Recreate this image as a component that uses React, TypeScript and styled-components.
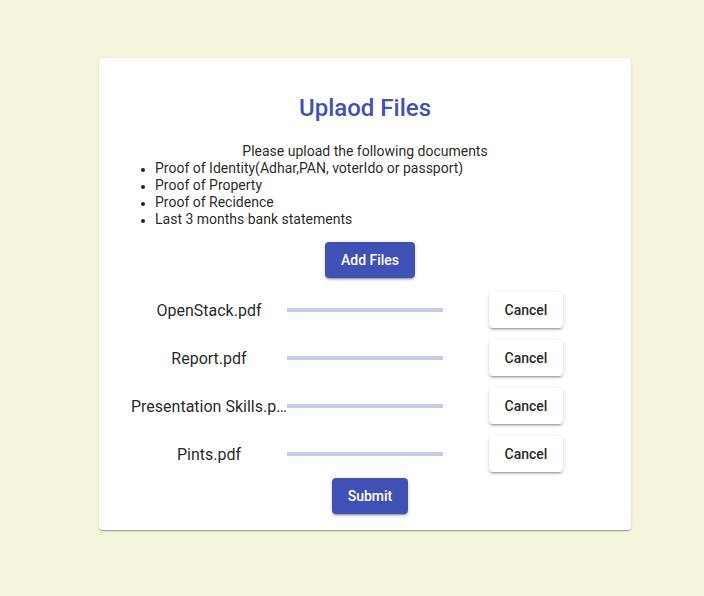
import styled, { createGlobalStyle } from "styled-components";

const GlobalStyle = createGlobalStyle`
  body {
    margin: 0;
    background-color: #f5f5dc;
    font-family: Roboto, "Liberation Sans", sans-serif;
  }
`;

const Page = styled.div`
  width: 704px;
  height: 596px;
  padding: 58px 0 0 99px;
  box-sizing: border-box;
`;

const Card = styled.div`
  width: 532px;
  box-sizing: border-box;
  padding: 36px 32px 16px;
  background-color: white;
  border-radius: 4px;
  box-shadow: 0px 2px 1px -1px rgba(0,0,0,0.2), 0px 1px 1px 0px rgba(0,0,0,0.14), 0px 1px 3px 0px rgba(0,0,0,0.12);
  display: flex;
  flex-direction: column;
`;

const Title = styled.h2`
  margin: 0;
  font-size: 24px;
  line-height: 28px;
  font-weight: 500;
  color: #3f51b5;
  text-align: center;
`;

const Info = styled.div`
  margin-top: 21px;
  font-size: 14px;
  line-height: 17px;
  color: rgba(0, 0, 0, 0.87);
`;

const Lead = styled.div`
  text-align: center;
`;

const DocList = styled.ul`
  margin: 0;
  padding-left: 24px;

  li::marker {
    font-size: 12px;
  }
`;

const Button = styled.button<{ $primary?: boolean }>`
  height: 36px;
  padding: 6px 16px;
  border: none;
  border-radius: 4px;
  font-family: Roboto, "Liberation Sans", sans-serif;
  font-size: 14px;
  font-weight: 500;
  cursor: pointer;
  background-color: ${(p) => (p.$primary ? "#3f51b5" : "white")};
  color: ${(p) => (p.$primary ? "white" : "rgba(0,0,0,0.87)")};
  box-shadow: 0px 3px 1px -2px rgba(0,0,0,0.2), 0px 2px 2px 0px rgba(0,0,0,0.14), 0px 1px 5px 0px rgba(0,0,0,0.12);
`;

const Center = styled.div<{ $top: number }>`
  display: flex;
  justify-content: center;
  margin-top: ${(p) => p.$top}px;
  padding-left: 10px;
`;

const Files = styled.div`
  margin-top: 14px;
  display: flex;
  flex-direction: column;
  gap: 12px;
`;

const Row = styled.div`
  display: grid;
  grid-template-columns: 156px 156px 156px;
  align-items: center;
  height: 36px;
`;

const FileName = styled.div`
  font-size: 16px;
  color: rgba(0, 0, 0, 0.87);
  text-align: center;
  white-space: nowrap;
  overflow: hidden;
  text-overflow: ellipsis;
`;

const Progress = styled.div`
  height: 4px;
  background-color: #c5cae9;
`;

const CancelCell = styled.div`
  display: flex;
  justify-content: center;
  padding-left: 10px;
`;

const files = ["OpenStack.pdf", "Report.pdf", "Presentation Skills.pdf", "Pints.pdf"];

const App = () => {
  return (
    <Page>
      <GlobalStyle />
      <Card>
        <Title>Uplaod Files</Title>
        <Info>
          <Lead>Please upload the following documents</Lead>
          <DocList>
            <li>Proof of Identity(Adhar,PAN, voterIdo or passport)</li>
            <li>Proof of Property</li>
            <li>Proof of Recidence</li>
            <li>Last 3 months bank statements</li>
          </DocList>
        </Info>
        <Center $top={14}>
          <Button $primary>Add Files</Button>
        </Center>
        <Files>
          {files.map((name) => (
            <Row key={name}>
              <FileName>{name}</FileName>
              <Progress />
              <CancelCell>
                <Button>Cancel</Button>
              </CancelCell>
            </Row>
          ))}
        </Files>
        <Center $top={6}>
          <Button $primary>Submit</Button>
        </Center>
      </Card>
    </Page>
  );
};

export default App;
